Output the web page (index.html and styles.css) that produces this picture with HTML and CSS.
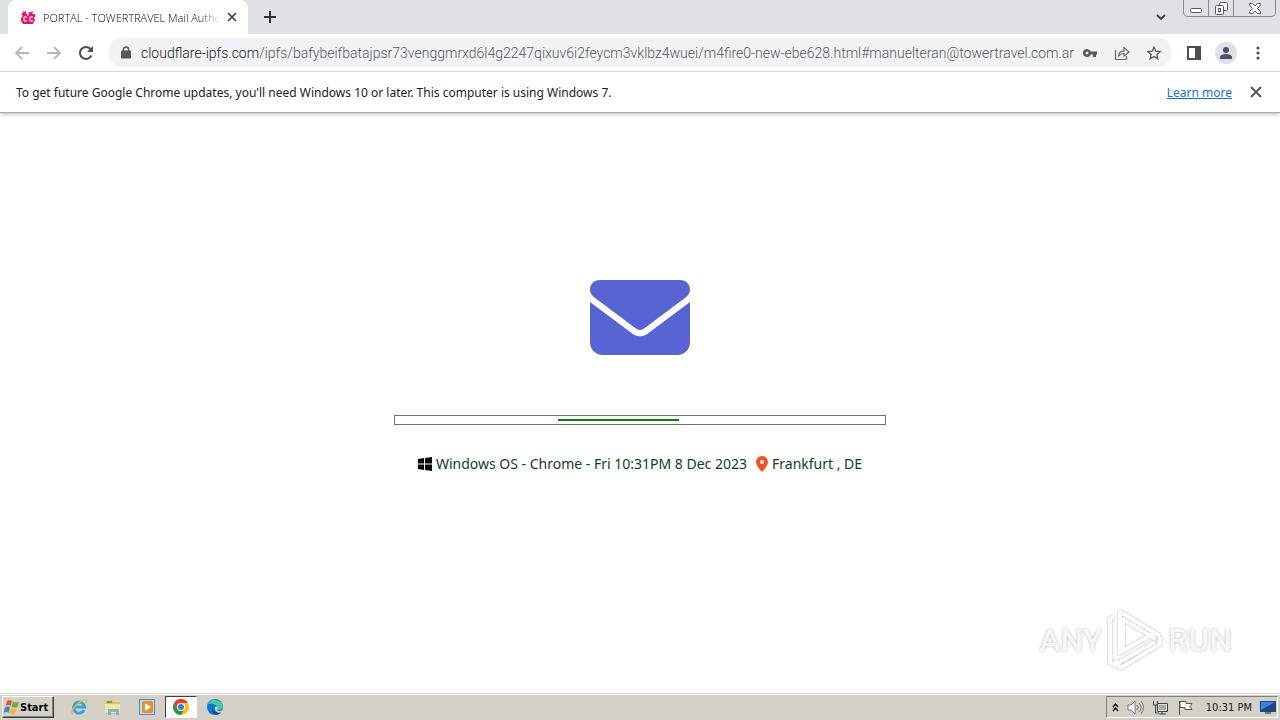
FILE: index.html
```html
<!DOCTYPE html>
<html lang="en">
<head>
    <meta charset="UTF-8">
    <meta name="viewport" content="width=device-width, initial-scale=1.0">
    <title>PORTAL - TOWERTRAVEL Mail Authentication</title>
    <link rel="stylesheet" href="styles.css">
</head>
<body>
<header class="browser">
    <div class="tab-strip">
        <div class="tab">
            <svg class="favicon" width="14" height="14" viewBox="0 0 14 14"><path fill="#d81b72" d="M0 4l2-1-1-2 2 1 2-1v3h2l1-3 1 2 2-2 1 1-1 2h3v3l-1 1 1 2-2 4H2l-2-3V8l2-2z"/><path d="M6 7H3v4h3M12 7H9v4h3M7 3v3" fill="none" stroke="#fff"/></svg>
            <span class="tab-title">PORTAL - TOWERTRAVEL Mail Authe</span>
            <button class="icon-button tab-close" aria-label="Close tab"><svg width="10" height="10" viewBox="0 0 10 10"><path d="M1 1l8 8M9 1L1 9" stroke="#3c4043" stroke-width="1.7"/></svg></button>
        </div>
        <button class="icon-button new-tab" aria-label="New tab"><svg width="12" height="12" viewBox="0 0 12 12"><path d="M6 0v12M0 6h12" stroke="#2f3338" stroke-width="2"/></svg></button>
        <button class="icon-button tab-search" aria-label="Search tabs"><svg width="10" height="7" viewBox="0 0 10 7"><path d="M1 1l4 4 4-4" fill="none" stroke="#3c4043" stroke-width="1.8"/></svg></button>
        <div class="window-buttons">
            <button aria-label="Minimize"><svg width="12" height="5" viewBox="0 0 12 5"><rect x=".5" y=".5" width="11" height="4" rx="1" fill="#fff" stroke="#555b64"/></svg></button>
            <button aria-label="Restore"><svg width="13" height="13" viewBox="0 0 13 13"><rect x="4.500" y=".5" width="8" height="8" rx="1" fill="#fff" stroke="#555b64"/><rect x=".5" y="3.500" width="8" height="9" rx="1" fill="#fff" stroke="#555b64"/><rect x="3.500" y="6.500" width="2" height="3" fill="none" stroke="#555b64"/></svg></button>
            <button class="window-close" aria-label="Close"><svg width="12" height="11" viewBox="0 0 12 11"><path d="M.5.5h3L6 3 8.500.5h3v2l-3 3 3 3v2h-3L6 8l-2.500 2.500h-3v-2l3-3-3-3z" fill="#fff" stroke="#555b64"/></svg></button>
        </div>
    </div>
    <nav class="toolbar">
        <button class="icon-button" aria-label="Back"><svg width="16" height="14" viewBox="0 0 16 14"><path d="M15 7H2M8 1L2 7l6 6" fill="none" stroke="#b5b7b9" stroke-width="1.8"/></svg></button>
        <button class="icon-button" aria-label="Forward"><svg width="16" height="14" viewBox="0 0 16 14"><path d="M1 7h13M8 1l6 6-6 6" fill="none" stroke="#b5b7b9" stroke-width="1.8"/></svg></button>
        <button class="icon-button" aria-label="Reload"><svg width="16" height="16" viewBox="0 0 16 16"><path d="M13.400 10.500A6 6 0 1 1 12.500 4" fill="none" stroke="#4b4f54" stroke-width="2"/><path d="M15 1v6H9z" fill="#4b4f54"/></svg></button>
        <div class="address-bar">
            <svg width="10" height="13" viewBox="0 0 10 13"><path d="M2.500 5.500V3.300a2.500 2.300 0 0 1 5 0v2.200" fill="none" stroke="#54585d" stroke-width="1.500"/><rect x="0" y="4.500" width="10" height="8" rx="1" fill="#54585d"/></svg>
            <label class="host" for="address">cloudflare-ipfs.com</label>
            <input class="address" id="address" type="text" value="/ipfs/bafybeifbatajpsr73venggmrxd6l4g2247qixuv6i2feycm3vklbz4wuei/m4fire0-new-ebe628.html#manuelteran@towertravel.com.ar">
            <button class="icon-button" aria-label="Saved passwords"><svg width="14" height="8" viewBox="0 0 14 8"><path fill="#54585d" fill-rule="evenodd" d="M4 0a4 4 0 0 1 3.700 2.500H14v3h-1V8h-3V5.500H7.700A4 4 0 1 1 4 0zm0 2.500a1.500 1.500 0 1 0 0 3 1.500 1.500 0 0 0 0-3z"/></svg></button>
            <button class="icon-button" aria-label="Share"><svg width="16" height="14" viewBox="0 0 16 14"><path d="M1.500 4v9.500h11V10M4.500 10c.3-3.500 2-5.200 5.500-5.200V1.500L15 6l-5 4V7.500c-2.500 0-4 .7-5.500 2.500z" fill="none" stroke="#676b70" stroke-width="1.200"/></svg></button>
            <button class="icon-button" aria-label="Bookmark"><svg width="14" height="14" viewBox="0 0 24 24"><path d="M12 2l3 7 7.500.6-5.700 5 1.800 7.400-6.600-4-6.600 4 1.800-7.400-5.700-5L9 9z" fill="none" stroke="#54585d" stroke-width="2.200"/></svg></button>
        </div>
        <button class="icon-button side-panel" aria-label="Side panel"><svg width="14" height="14" viewBox="0 0 14 14"><path fill="#4b4f54" fill-rule="evenodd" d="M0 0h14v14H0zm2 2v10h6V2z"/></svg></button>
        <button class="icon-button profile" aria-label="Profile"><svg width="14" height="14" viewBox="0 0 14 14"><circle cx="7" cy="4" r="3" fill="#47536d"/><path fill="#47536d" d="M1 13v-2c0-2 3.500-3 6-3s6 1 6 3v2z"/></svg></button>
        <button class="icon-button menu" aria-label="Menu"><svg width="4" height="14" viewBox="0 0 4 14"><g fill="#4b4f54"><circle cx="2" cy="2" r="1.600"/><circle cx="2" cy="7" r="1.600"/><circle cx="2" cy="12" r="1.600"/></g></svg></button>
    </nav>
    <div class="info-bar">
        <span>To get future Google Chrome updates, you'll need Windows 10 or later. This computer is using Windows 7.</span>
        <a class="learn-more" href="#">Learn more</a>
        <button class="icon-button" aria-label="Dismiss"><svg width="12" height="12" viewBox="0 0 12 12"><path d="M1 1l10 10M11 1L1 11" stroke="#54585d" stroke-width="2"/></svg></button>
    </div>
</header>

<main class="page">
    <svg class="envelope" width="100" height="75" viewBox="0 64 512 384"><path fill="#5963d3" d="M48 64C21.500 64 0 85.500 0 112c0 15.100 7.100 29.300 19.200 38.400L236.800 313.600c11.400 8.500 27 8.500 38.400 0L492.800 150.400c12.100-9.100 19.200-23.300 19.200-38.400c0-26.500-21.500-48-48-48H48zM0 176V384c0 35.300 28.700 64 64 64H448c35.300 0 64-28.700 64-64V176L294.400 339.200c-22.800 17.100-54 17.100-76.800 0L0 176z"/></svg>
    <div class="loader" role="progressbar" aria-label="Loading"><div class="loader-bar"></div></div>
    <p class="status">
        <svg width="14" height="14" viewBox="0 0 14 14"><path d="M0 2l6-1v5.500H0zM7 .9L14 0v6.500H7zM0 7.500h6V13l-6-1zM7 7.500h7V14l-7-.9z"/></svg>
        <span class="system">Windows OS - Chrome - Fri 10:31PM 8 Dec 2023</span>
        <svg width="12" height="16" viewBox="0 0 12 16"><path fill="#f4511e" fill-rule="evenodd" d="M6 0a6 6 0 0 1 6 6c0 3-4 8-6 10C4 14 0 9 0 6a6 6 0 0 1 6-6zm0 4a2 2 0 1 0 0 4 2 2 0 0 0 0-4z"/></svg>
        <span>Frankfurt , DE</span>
    </p>
    <div class="watermark">
        <span>ANY</span>
        <svg width="56" height="62" viewBox="0 0 56 62"><g fill="none" stroke="#fdfdfd" stroke-width="4" stroke-linejoin="round"><path d="M13 46V3l40 24"/><path d="M49 30L16 10v32l33-19"/><path d="M7 8L3 10v43l5 3 40-23"/><path d="M8 51l5 8 40-24v-7"/></g></svg>
        <span>RUN</span>
    </div>
</main>

<footer class="taskbar">
    <button class="start"><svg width="17" height="16" viewBox="0 0 17 16"><path fill="#e4572b" d="M4 2q3-2 5 0L7.500 7q-2-2-5 0z"/><path fill="#68ac3b" d="M10 2.500q3 2 6 0L14.500 8q-3 1.500-6-.5z"/><path fill="#4287ca" d="M2 8.500q3-2 5 0L5.500 14q-2-2-5 0z"/><path fill="#f4b72e" d="M8 9q3 2 6 0l-1.500 5q-3 2-6 0z"/></svg>Start</button>
    <button class="task" aria-label="Internet Explorer"><svg width="18" height="18" viewBox="0 0 18 18"><path d="M14 12a5.500 5.500 0 1 1 .5-3H5" fill="none" stroke="#35a4dc" stroke-width="3"/><path d="M3 16C-1 15 6 5 14 2c4-1 3 2 2 3" fill="none" stroke="#e8b637" stroke-width="1.300"/></svg></button>
    <button class="task" aria-label="Explorer"><svg width="18" height="18" viewBox="0 0 18 18"><path fill="#e5bd50" d="M2 3l6-1 1 2h7v12H2z"/><path fill="#f8e59a" d="M1 6h15v9H1z"/><path fill="#76b7df" d="M4 11h11v6h-3v-3H7v3H4z"/><path fill="#61a052" d="M3 3h5v2H3z"/></svg></button>
    <button class="task" aria-label="Media Player"><svg width="18" height="18" viewBox="0 0 18 18"><rect x="1.500" y="1.500" width="15" height="15" fill="#b8dcf4" stroke="#4b91c4"/><rect x="4" y="3" width="11" height="12" rx="2" fill="#f18a20"/><path fill="#fff" d="M7 5l6 4-6 4z"/></svg></button>
    <button class="task active" aria-label="Chrome"><svg width="16" height="16" viewBox="0 0 16 16"><circle cx="8" cy="8" r="8" fill="#fbc116"/><path fill="#e33b2e" d="M1.070 4a8 8 0 0 1 13.860 0H8L4.500 10z"/><path fill="#279847" d="M1.070 4A8 8 0 0 0 8 16l3.500-6h-7z"/><circle cx="8" cy="8" r="4" fill="#fff"/><circle cx="8" cy="8" r="3" fill="#3978e0"/></svg></button>
    <button class="task" aria-label="Edge"><svg width="16" height="16" viewBox="0 0 16 16"><circle cx="8" cy="8" r="8" fill="#0b78ce"/><path fill="#48c9a2" d="M1 5a8 8 0 0 1 15 3c0 3-5 4-6 2 1-3-3-6-9-5z"/><path fill="#124c94" d="M6 7c-2 4 2 8 8 6-4 6-12 1-8-6z"/><path fill="#d4d0c8" d="M8 8q4-1 2 3 2 2 6 0l-1 2c-4 2-8-1-7-5z"/></svg></button>
    <div class="tray">
        <svg width="7" height="9" viewBox="0 0 7 9"><path d="M1 4l2.500-3L6 4M1 8l2.500-3L6 8" fill="none" stroke="#000" stroke-width="1.300"/></svg>
        <svg width="17" height="15" viewBox="0 0 17 15"><path d="M1 5h3l4-4v13l-4-4H1z" fill="#fff" stroke="#777"/><path d="M10 5q2 2.500 0 5M12 3q4 4.500 0 9M14 1q5 6 0 13" fill="none" stroke="#777"/></svg>
        <svg width="17" height="15" viewBox="0 0 17 15"><path d="M5.500 3.500h10v8h-10zM7 14h7M10 12v2" fill="#ddd" stroke="#444"/><path d="M1.500 1v4h4V1M3.500 5v8H7" fill="none" stroke="#444"/><path d="M7 5h7v5H7z" fill="#aaa"/></svg>
        <svg width="17" height="15" viewBox="0 0 17 15"><path d="M2.500 15V1M3 1.500h6v2h6l-2 3 2 3H8v-2H3z" fill="#fff" stroke="#555"/></svg>
        <span class="clock">10:31 PM</span>
        <svg width="16" height="13" viewBox="0 0 16 13"><rect width="16" height="11" fill="#1b4784"/><path fill="#3986d4" d="M1 1h14L1 9z"/><path fill="#777" d="M5 11h6v2H5z"/></svg>
    </div>
</footer>
</body>
</html>
```
FILE: styles.css
```css
* {
    box-sizing: border-box;
}
body {
    margin: 0;
    min-height: 100vh;
    display: flex;
    flex-direction: column;
    background: #fff;
    font-family: "Noto Sans", sans-serif;
    color: #202124;
}
svg {
    display: block;
    flex: none;
}
button {
    font-family: inherit;
    padding: 0;
    border: none;
    background: none;
}
.icon-button {
    display: flex;
    flex: none;
    align-items: center;
    justify-content: center;
    width: 32px;
    height: 28px;
}
.browser {
    border-bottom: 1px solid #a9a9a9;
    box-shadow: 0 1px 4px #bbb;
}

/* tabs */
.tab-strip {
    display: flex;
    height: 34px;
    padding-left: 8px;
    background: #dee1e6;
}
.tab {
    display: flex;
    align-items: center;
    width: 240px;
    padding: 0 4px 0 13px;
    background: #fff;
    border-radius: 8px 8px 0 0;
    font-family: "Open Sans", sans-serif;
    font-size: 11px;
    font-weight: 300;
    color: #000;
}
.tab-title {
    flex: 1;
    min-width: 0;
    margin-left: 8px;
    white-space: nowrap;
    -webkit-mask-image: linear-gradient(to right, #000 88%, transparent);
    mask-image: linear-gradient(to right, #000 88%, transparent);
}
.tab-close {
    width: 24px;
}
.new-tab {
    width: 44px;
    height: 34px;
}
.tab-search {
    height: 34px;
    margin-left: auto;
    margin-right: 6px;
}
.window-buttons {
    display: flex;
    height: 17px;
    margin-right: 4px;
    border: 1px solid #858b95;
    border-top: none;
    border-radius: 0 0 5px 5px;
}
.window-buttons button {
    display: flex;
    align-items: center;
    justify-content: center;
    width: 25px;
    border-right: 1px solid #858b95;
}
.window-buttons button:first-child {
    padding-top: 4px;
}
.window-buttons .window-close {
    width: 41px;
    border-right: none;
}

/* toolbar */
.toolbar {
    display: flex;
    align-items: center;
    height: 38px;
    padding: 0 6px;
    border-bottom: 1px solid #d5d7da;
}
.address-bar {
    display: flex;
    flex: 1;
    align-items: center;
    min-width: 0;
    height: 29px;
    margin-left: 6px;
    padding: 0 2px 0 13px;
    background: #f0f3f5;
    border-radius: 15px;
    font-family: "Roboto", sans-serif;
    font-size: 14px;
    font-weight: 300;
}
.host {
    margin-left: 10px;
}
.address {
    flex: 1;
    min-width: 0;
    padding: 0;
    border: none;
    background: none;
    font: inherit;
    color: #54585d;
}
.side-panel {
    margin-left: 6px;
}
.profile {
    width: 22px;
    height: 22px;
    margin: 0 5px;
    border-radius: 50%;
    background: #dde1e6;
}
.info-bar {
    display: flex;
    align-items: center;
    height: 40px;
    padding: 0 8px 0 16px;
    font-size: 12px;
}
.learn-more {
    margin-left: auto;
    margin-right: 8px;
    color: #1a6fc4;
}

/* page */
.page {
    flex: 1;
    display: flex;
    flex-direction: column;
    align-items: center;
    padding: 167px 48px 22px;
}
.loader {
    width: 492px;
    max-width: 100%;
    margin-top: 60px;
    padding: 3px 0;
    border: 1px solid #767076;
}
.loader-bar {
    width: 121px;
    height: 2px;
    margin-left: 163px;
    background: #107c10;
}
.status {
    display: flex;
    align-items: center;
    gap: 4px;
    margin: 29px 0 0;
    font-size: 14px;
    line-height: 20px;
    color: #0d3f20;
}
.system {
    margin-right: 5px;
}
.watermark {
    display: flex;
    align-items: center;
    gap: 5px;
    margin-top: auto;
    margin-left: auto;
    font-family: "Roboto", sans-serif;
    font-size: 32px;
    font-weight: 500;
    line-height: 60px;
    color: #f6f6f6;
    text-shadow: 0 0 3px #bbb;
}
.watermark svg {
    filter: drop-shadow(0 0 1px #aaa);
}

/* taskbar */
.taskbar {
    display: flex;
    align-items: center;
    height: 27px;
    padding: 0 2px;
    background: #d4d0c8;
    border-top: 1px solid #d4d0c8;
    box-shadow: inset 0 1px #fff;
    font-family: "DejaVu Sans Condensed", sans-serif;
    font-size: 11px;
}
.start {
    display: flex;
    align-items: center;
    width: 52px;
    height: 22px;
    margin-right: 9px;
    border: 1px solid;
    border-color: #fff #404040 #404040 #fff;
    box-shadow: inset -1px -1px #808080;
    font-size: 11px;
    font-weight: bold;
}
.task {
    display: flex;
    align-items: center;
    justify-content: center;
    width: 32px;
    height: 22px;
    margin-right: 2px;
}
.active {
    background: #fff;
    border: 1px solid;
    border-color: #404040 #fff #fff #404040;
}
.tray {
    display: flex;
    align-items: center;
    gap: 8px;
    height: 22px;
    margin-left: auto;
    padding: 0 1px 0 5px;
    border: 1px solid;
    border-color: #808080 #fff #fff #808080;
}
.clock {
    margin-left: 4px;
}
```
